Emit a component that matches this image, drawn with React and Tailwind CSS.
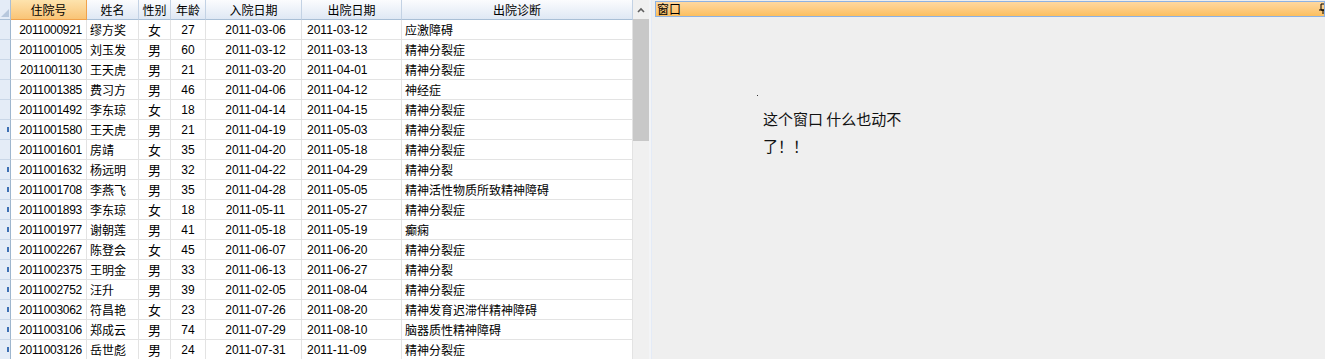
import React from "react";

const rows = [
  ["2011000921", "缪方奖", "女", "27", "2011-03-06", "2011-03-12", "应激障碍"],
  ["2011001005", "刘玉发", "男", "60", "2011-03-12", "2011-03-13", "精神分裂症"],
  ["2011001130", "王天虎", "男", "21", "2011-03-20", "2011-04-01", "精神分裂症"],
  ["2011001385", "费习方", "男", "46", "2011-04-06", "2011-04-12", "神经症"],
  ["2011001492", "李东琼", "女", "18", "2011-04-14", "2011-04-15", "精神分裂症"],
  ["2011001580", "王天虎", "男", "21", "2011-04-19", "2011-05-03", "精神分裂症"],
  ["2011001601", "房靖", "女", "35", "2011-04-20", "2011-05-18", "精神分裂症"],
  ["2011001632", "杨远明", "男", "32", "2011-04-22", "2011-04-29", "精神分裂"],
  ["2011001708", "李燕飞", "男", "35", "2011-04-28", "2011-05-05", "精神活性物质所致精神障碍"],
  ["2011001893", "李东琼", "女", "18", "2011-05-11", "2011-05-27", "精神分裂症"],
  ["2011001977", "谢朝莲", "男", "41", "2011-05-18", "2011-05-19", "癫痫"],
  ["2011002267", "陈登会", "女", "45", "2011-06-07", "2011-06-20", "精神分裂症"],
  ["2011002375", "王明金", "男", "33", "2011-06-13", "2011-06-27", "精神分裂"],
  ["2011002752", "汪升", "男", "39", "2011-02-05", "2011-08-04", "精神分裂症"],
  ["2011003062", "符昌艳", "女", "23", "2011-07-26", "2011-08-20", "精神发育迟滞伴精神障碍"],
  ["2011003106", "郑成云", "男", "74", "2011-07-29", "2011-08-10", "脑器质性精神障碍"],
  ["2011003126", "岳世彪", "男", "24", "2011-07-31", "2011-11-09", "精神分裂症"],
];

const marks = [false, false, false, false, false, true, false, true, true, true, true, true, true, true, true, true, true];

const cjk = { fontFamily: '"Noto Sans CJK SC", sans-serif' };
const num = { fontFamily: '"Liberation Sans", Arial, sans-serif' };

const cols = "grid-cols-[11px_76px_52px_32px_35px_96px_100px_231px]";

function HeaderCell({ children, selected }) {
  return (
    <div
      className={
        "h-[20px] flex items-center justify-center text-[12px] text-black border-b border-r " +
        (selected
          ? "bg-gradient-to-b from-[#fde3ad] to-[#f9c476] border-[#f0a24c]"
          : "bg-gradient-to-b from-[#fbfcfe] to-[#dfe8f4] border-r-[#c3d2e4] border-b-[#a9bfd6]")
      }
      style={cjk}
    >
      {children}
    </div>
  );
}

function Cell({ children, className = "", font = cjk }) {
  return (
    <div
      className={"h-[20px] flex items-center text-[12px] text-black bg-white border-b border-r border-[#e3e3e3] overflow-hidden whitespace-nowrap " + className}
      style={font}
    >
      {children}
    </div>
  );
}

export default function App() {
  return (
    <div className="w-[1325px] h-[359px] overflow-hidden flex bg-[#efefef]">
      {/* Grid */}
      <div className={"grid " + cols + " w-[633px] shrink-0 content-start bg-white"}>
        <div className="h-[20px] relative bg-[#e4ecf7] border-r border-b border-[#a9bfd6]">
          <svg className="absolute right-[1px] bottom-[2px]" width="8" height="8" viewBox="0 0 8 8">
            <polygon points="8,0 8,8 0,8" fill="#b7c8dd" />
          </svg>
        </div>
        <HeaderCell selected>住院号</HeaderCell>
        <HeaderCell>姓名</HeaderCell>
        <HeaderCell>性别</HeaderCell>
        <HeaderCell>年龄</HeaderCell>
        <HeaderCell>入院日期</HeaderCell>
        <HeaderCell>出院日期</HeaderCell>
        <HeaderCell>出院诊断</HeaderCell>
        {rows.map((r, i) => (
          <React.Fragment key={i}>
            <div className="h-[20px] bg-[#e4ecf7] border-r border-r-[#9eb6ce] border-b border-b-[#c9d7e8] flex items-center justify-end">
              {marks[i] && <div className="w-[2px] h-[5px] bg-[#3d6fb3] mr-[1px]" />}
            </div>
            <Cell className="justify-end pr-[4px] text-[11px] tracking-[-0.3px]" font={num}>{r[0]}</Cell>
            <Cell className="pl-[3px]">{r[1]}</Cell>
            <Cell className="justify-center text-[13px]">{r[2]}</Cell>
            <Cell className="justify-center text-[11px]" font={num}>{r[3]}</Cell>
            <Cell className="justify-center text-[11px] pl-[4px]" font={num}>{r[4]}</Cell>
            <Cell className="pl-[5px] text-[11px]" font={num}>{r[5]}</Cell>
            <Cell className="pl-[3px]">{r[6]}</Cell>
          </React.Fragment>
        ))}
      </div>

      {/* Scrollbar */}
      <div className="w-[16px] shrink-0 flex flex-col bg-[#f0f0f0]">
        <div className="h-[19px] flex items-center justify-center">
          <svg width="8" height="6" viewBox="0 0 8 6">
            <polyline points="1,5 4,2 7,5" fill="none" stroke="#5f5f5f" strokeWidth="1.6" />
          </svg>
        </div>
        <div className="h-[122px] bg-[#c8c8c8]" />
      </div>

      {/* Splitter strip */}
      <div className="w-[6px] shrink-0 flex bg-[#efefef]">
        <div className="w-[2px] bg-[#f3f4f6]" />
        <div className="w-[1px] bg-[#e4ebf7]" />
      </div>

      {/* Right pane */}
      <div className="flex-1 flex flex-col pt-[1px]">
        <div className="h-[16px] border border-[#8db2e3] bg-gradient-to-b from-[#fed8a0] to-[#fcbf5e] flex items-center justify-between overflow-hidden">
          <span className="text-[12px] leading-none text-black pl-[1px]" style={cjk}>窗口</span>
          <svg className="mr-[-4px]" width="10" height="12" viewBox="0 0 10 12">
            <path d="M3 1h5M3 1v6h5V1M1 7h9M5 7v4" fill="none" stroke="#000" strokeWidth="1" />
          </svg>
        </div>
        <div className="pl-[102px] pt-[78px] relative">
          <div className="w-[1px] h-[1px] bg-[#333] mb-[9px]" />
          <p className="w-[153px] pl-[6px] text-[15px] leading-[27px] text-[#111]" style={cjk}>
            这个窗口 什么也动不了！！
          </p>
        </div>
      </div>
    </div>
  );
}
